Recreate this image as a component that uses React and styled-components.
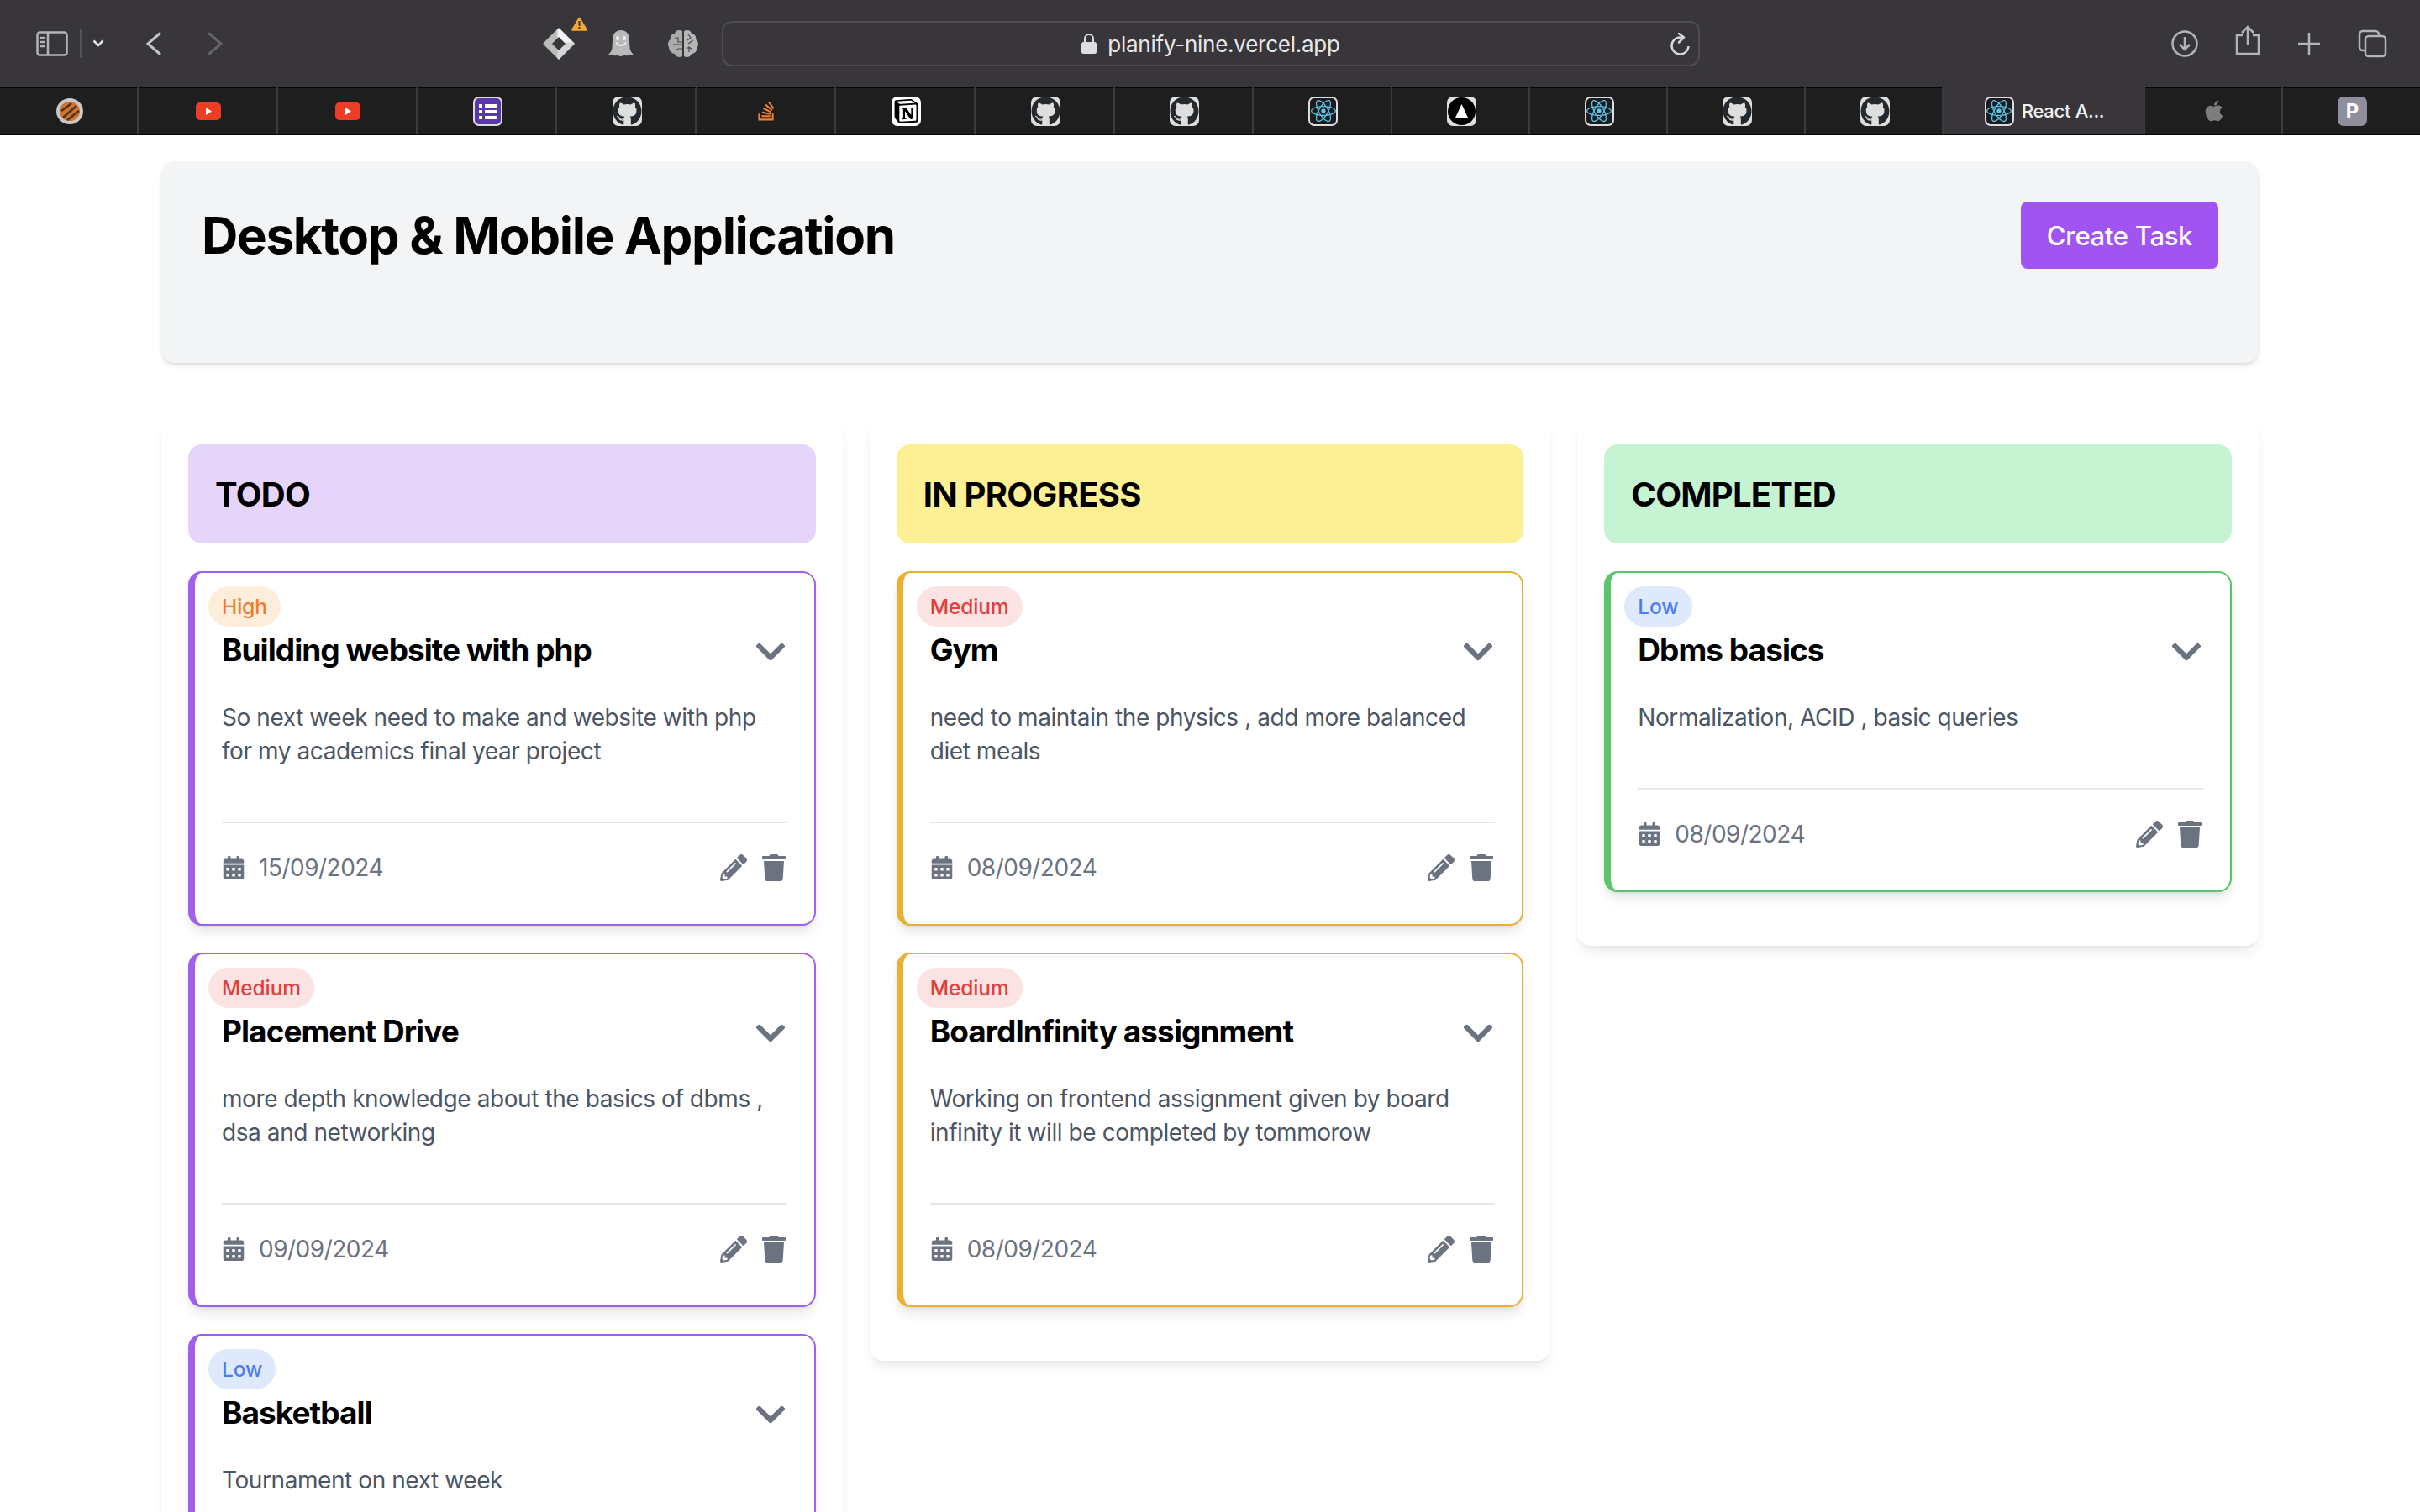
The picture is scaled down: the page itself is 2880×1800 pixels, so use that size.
import { styled, createGlobalStyle } from "styled-components";
import { FaChevronDown, FaPencilAlt, FaTrash, FaCalendarAlt, FaGithub, FaReact, FaApple, FaStackOverflow } from "react-icons/fa";
import { SiNotion } from "react-icons/si";

const GlobalStyle = createGlobalStyle`
  * { box-sizing: border-box; }
  html, body { margin: 0; padding: 0; background: #fff; overflow: hidden; }
  body { font-family: Inter, "Liberation Sans", sans-serif; }
`;

const Screen = styled.div`
  width: 2880px;
  height: 1800px;
  overflow: hidden;
  display: flex;
  flex-direction: column;
`;

// browser chrome
const Toolbar = styled.div`
  height: 103px;
  flex: none;
  background: #38363a;
  display: flex;
  align-items: center;
  color: #b4b4b6;
`;

const ToolIcon = styled.svg`
  flex: none;
  display: block;
  margin-left: ${({ $left }) => $left || 0}px;
  position: relative;
  top: ${({ $nudge }) => $nudge || 0}px;
`;

const ExtensionSlot = styled.div`
  position: relative;
  flex: none;
  margin-left: ${({ $left }) => $left || 0}px;
  display: flex;
`;

const WarningBadge = styled.svg`
  position: absolute;
  right: -15px;
  top: -13px;
`;

const AddressBar = styled.div`
  flex: none;
  margin-left: 27px;
  width: 1164px;
  height: 54px;
  border: 2px solid #4e4c50;
  border-radius: 12px;
  display: flex;
  align-items: center;
  justify-content: center;
  gap: 13px;
  position: relative;
`;

const AddressText = styled.span`
  font-size: 26px;
  font-weight: 400;
  color: #e8e8e8;
  letter-spacing: -0.25px;
  position: relative;
  top: 1px;
`;

const ReloadIcon = styled.svg`
  position: absolute;
  right: 9px;
  top: 12px;
`;

const TabStrip = styled.div`
  height: 58px;
  flex: none;
  display: flex;
  background: #1e1e1f;
`;

const Tab = styled.div`
  flex: 0 0 ${({ $width }) => $width}px;
  display: flex;
  align-items: center;
  justify-content: center;
  gap: 9px;
  padding-left: 2px;
  background: ${({ $active }) => ($active ? "#38363a" : "#1e1e1f")};
  border-top: 2px solid ${({ $active }) => ($active ? "#38363a" : "#050505")};
  border-bottom: 2px solid #050505;
  border-right: 2px solid #3b3b3d;
  &:last-child { border-right: none; }
`;

const TabTitle = styled.span`
  font-size: 22px;
  font-weight: 500;
  color: #f0f0f0;
  letter-spacing: -0.3px;
`;

const FaviconBox = styled.div`
  width: 35px;
  height: 35px;
  border-radius: 7px;
  display: flex;
  align-items: center;
  justify-content: center;
  background: ${({ $bg }) => $bg || "#dedede"};
  border: ${({ $border }) => ($border ? `2px solid ${$border}` : "none")};
  color: ${({ $fg }) => $fg || "#24292e"};
  font-size: 24px;
  font-weight: 700;
  overflow: hidden;
`;

const PlainFavicon = styled.div`
  display: flex;
  color: ${({ $fg }) => $fg || "#fff"};
`;

// page
const Page = styled.main`
  flex: 1;
  padding: 31px 192px 0;
  background: #fff;
  min-height: 0;
`;

const HeaderCard = styled.header`
  height: 240px;
  padding: 48px;
  background: #f3f4f6;
  border-radius: 16px;
  box-shadow: 0 4px 6px -1px rgba(0, 0, 0, 0.1), 0 2px 4px -2px rgba(0, 0, 0, 0.1);
  display: flex;
  justify-content: space-between;
  align-items: flex-start;
`;

const PageTitle = styled.h1`
  margin: 0;
  font-size: 60px;
  line-height: 80px;
  font-weight: 700;
  color: #000;
  letter-spacing: -1.3px;
`;

const CreateButton = styled.button`
  width: 235px;
  height: 80px;
  border: none;
  border-radius: 8px;
  background: #a055f0;
  color: #fff;
  font-family: inherit;
  font-size: 31px;
  font-weight: 500;
  letter-spacing: -0.3px;
`;

const Board = styled.section`
  margin-top: 65px;
  display: grid;
  grid-template-columns: repeat(3, 1fr);
  gap: 32px;
  align-items: start;
`;

const Column = styled.div`
  padding: 32px 32px 32px;
  background: #fff;
  border-radius: 16px;
  box-shadow: 0 10px 15px -3px rgba(0, 0, 0, 0.08), 0 4px 6px -4px rgba(0, 0, 0, 0.08);
`;

const ColumnHead = styled.h2`
  margin: 0 0 33px;
  height: 118px;
  padding: 0 32px;
  display: flex;
  align-items: center;
  border-radius: 16px;
  background: ${({ $bg }) => $bg};
  font-size: 40px;
  font-weight: 700;
  color: #000;
  letter-spacing: -0.75px;
`;

const Card = styled.article`
  margin-bottom: 32px;
  padding: 16px 0 0;
  background: #fff;
  border-radius: 16px;
  border: 2px solid ${({ $accent }) => $accent};
  border-left-width: 8px;
  box-shadow: 0 10px 15px -3px rgba(0, 0, 0, 0.1), 0 4px 6px -4px rgba(0, 0, 0, 0.1);
`;

const Badge = styled.span`
  display: inline-flex;
  align-items: center;
  margin-left: 16px;
  height: 48px;
  padding: 0 16px;
  border-radius: 24px;
  background: ${({ $bg }) => $bg};
  color: ${({ $fg }) => $fg};
  font-size: 24.5px;
  font-weight: 500;
  letter-spacing: -0.1px;
`;

const CardBody = styled.div`
  padding: 0 32px 46px;
`;

const TitleRow = styled.div`
  height: 54px;
  margin-bottom: 2px;
  display: flex;
  align-items: center;
  justify-content: space-between;
  color: #6b7280;
`;

const CardTitle = styled.h3`
  margin: 0;
  font-size: 37px;
  font-weight: 700;
  color: #000;
  letter-spacing: -0.95px;
`;

const Chevron = styled(FaChevronDown)`
  margin-top: 6px;
`;

const Description = styled.p`
  margin: 34px 0 64px;
  font-size: 28px;
  line-height: 40px;
  color: #4b5563;
  letter-spacing: -0.42px;
`;

const Footer = styled.div`
  border-top: 2px solid #e5e7eb;
  padding-top: 32px;
  height: 42px;
  box-sizing: content-box;
  display: flex;
  align-items: center;
  justify-content: space-between;
  color: #6b7280;
`;

const DateInfo = styled.div`
  display: flex;
  align-items: center;
  gap: 16px;
  font-size: 28px;
  letter-spacing: -0.5px;
`;

const Actions = styled.div`
  display: flex;
  align-items: center;
  gap: 16px;
`;

function Sidebar() {
  return (
    <ToolIcon $left={43} width="38" height="30" viewBox="0 0 38 30" fill="none" stroke="currentColor" strokeWidth="2.5">
      <rect x="1.5" y="1.5" width="35" height="27" rx="3" />
      <path d="M14 2v26" />
      <path d="M5 8h5M5 13h5M5 18h5" />
    </ToolIcon>
  );
}

function Diamond() {
  return (
    <svg width="38" height="38" viewBox="0 0 38 38" strokeWidth="3" strokeLinejoin="round">
      <path d="M2 19 19 2 12 19 19 36Z M2 19 19 2 19 11 11 19 19 27 19 36Z" fill="#bcbcbc" stroke="#bcbcbc" />
      <path d="M19 2 36 19 27 19 19 11Z" fill="#f4f4f4" stroke="#f4f4f4" />
      <path d="M36 19 19 36 19 27 27 19Z" fill="#d6d6d6" stroke="#d6d6d6" />
      <path d="M19 11 27 19 19 27 11 19Z" fill="#38363a" />
    </svg>
  );
}

function Ghost() {
  return (
    <svg width="30" height="31" viewBox="0 0 30 31">
      <path d="M15 0C8 0 5 5 5 12L4.500 21C4 25 2 27 0 29c2 .5 4 .5 5-.5 1.500 2 4 2.500 5.500.5 1.500 2.500 7 2.500 9 0 1.500 2 4 1.500 5.500-.5 1 1 3 1 5 .5-2-2-4-4-4.500-8L25 12C25 5 22 0 15 0Z" fill="#b9b9b9" />
      <ellipse cx="11" cy="9.500" rx="1.900" ry="2.800" fill="#ececec" />
      <ellipse cx="19" cy="9.500" rx="1.900" ry="2.800" fill="#ececec" />
      <path d="M9.500 15c2.500 4 8.500 4 11 0" fill="none" stroke="#ececec" strokeWidth="1.800" strokeLinecap="round" />
    </svg>
  );
}

function Brain() {
  return (
    <svg width="38" height="34" viewBox="0 0 38 34">
      <path d="M18 2C14 0 10 1 9 5 5 5 3 9 4 12 1 14 0 18 2 21 2 26 6 29 9 29 10 33 15 34 18 32Z" fill="#ababab" />
      <path d="M20 2C24 0 28 1 29 5 33 5 35 9 34 12 37 14 38 18 36 21 36 26 32 29 29 29 28 33 23 34 20 32Z" fill="#b6b6b6" />
      <path d="M7 18h11M9 10h4v5h5M10 25l3-2h5M25 6l3 4-4 3M31 13l-6 4M30 24l-4-3-3 2M26 21v6" fill="none" stroke="#4a484c" strokeWidth="1.200" />
    </svg>
  );
}

function Favicon({ kind }) {
  if (kind === "lpu") {
    return (
      <svg width="32" height="31" viewBox="0 0 32 31">
        <ellipse cx="16" cy="15.500" rx="16" ry="15.500" fill="#c8c8c8" />
        <ellipse cx="16" cy="15.500" rx="12" ry="11.500" fill="#d4742a" />
        <path d="M8 23 24 9M6 15 18 6M13 26 27 15" stroke="#4a3426" strokeWidth="2.500" />
      </svg>
    );
  }
  if (kind === "youtube") {
    return (
      <svg width="30" height="21" viewBox="0 0 30 21">
        <rect width="30" height="21" rx="5" fill="#ee3d24" />
        <path d="M12 6l7 4.500L12 15Z" fill="#fff" />
      </svg>
    );
  }
  if (kind === "forms") {
    return (
      <FaviconBox $bg="#5a37ad" $border="#dcdcdc">
        <svg width="23" height="23" viewBox="0 0 23 23" fill="#fff">
          <path d="M1 3h4v4H1zM8 3h14v4H8zM1 10h4v4H1zM8 10h14v4H8zM1 17h4v4H1zM8 17h14v4H8z" />
        </svg>
      </FaviconBox>
    );
  }
  if (kind === "github") {
    return (
      <FaviconBox>
        <FaGithub size={35} />
      </FaviconBox>
    );
  }
  if (kind === "stack") {
    return (
      <PlainFavicon $fg="#ee8131">
        <FaStackOverflow size={26} />
      </PlainFavicon>
    );
  }
  if (kind === "notion") {
    return (
      <FaviconBox $bg="#fff" $fg="#000">
        <SiNotion size={29} />
      </FaviconBox>
    );
  }
  if (kind === "react") {
    return (
      <FaviconBox $bg="#1c1c1e" $border="#dcdcdc" $fg="#5cc8ee">
        <FaReact size={30} />
      </FaviconBox>
    );
  }
  if (kind === "triangle") {
    return (
      <FaviconBox>
        <svg width="33" height="33" viewBox="0 0 33 33">
          <circle cx="16.500" cy="16.500" r="16.500" fill="#000" />
          <path d="M16.500 8 24 24H9Z" fill="#fff" />
        </svg>
      </FaviconBox>
    );
  }
  if (kind === "apple") {
    return (
      <PlainFavicon $fg="#7d7d7f">
        <FaApple size={28} />
      </PlainFavicon>
    );
  }
  return (
    <FaviconBox $bg="#8e8e9c" $fg="#fff">
      P
    </FaviconBox>
  );
}

const tabs = [
  { kind: "lpu", width: 165 },
  { kind: "youtube", width: 166 },
  { kind: "youtube", width: 166 },
  { kind: "forms", width: 166 },
  { kind: "github", width: 166 },
  { kind: "stack", width: 166 },
  { kind: "notion", width: 166 },
  { kind: "github", width: 166 },
  { kind: "github", width: 165 },
  { kind: "react", width: 165 },
  { kind: "triangle", width: 164 },
  { kind: "react", width: 164 },
  { kind: "github", width: 164 },
  { kind: "github", width: 164 },
];

const low = { label: "Low", bg: "#dfe9fc", fg: "#4a7df0" };
const medium = { label: "Medium", bg: "#fbe3e3", fg: "#e23d3d" };
const high = { label: "High", bg: "#fdeedb", fg: "#ee7d2f" };

const columns = [
  {
    title: "TODO",
    bg: "#e6d5fb",
    accent: "#a05ff0",
    cards: [
      {
        priority: high,
        title: "Building website with php",
        text: "So next week need to make and website with php for my academics final year project",
        date: "15/09/2024",
      },
      {
        priority: medium,
        title: "Placement Drive",
        text: "more depth knowledge about the basics of dbms , dsa and networking",
        date: "09/09/2024",
      },
      {
        priority: low,
        title: "Basketball",
        text: "Tournament on next week",
        date: "10/09/2024",
      },
    ],
  },
  {
    title: "IN PROGRESS",
    bg: "#fdef93",
    accent: "#ebb02f",
    cards: [
      {
        priority: medium,
        title: "Gym",
        text: "need to maintain the physics , add more balanced diet meals",
        date: "08/09/2024",
      },
      {
        priority: medium,
        title: "BoardInfinity assignment",
        text: "Working on frontend assignment given by board infinity it will be completed by tommorow",
        date: "08/09/2024",
      },
    ],
  },
  {
    title: "COMPLETED",
    bg: "#c6f4d2",
    accent: "#5dc46b",
    cards: [
      {
        priority: low,
        title: "Dbms basics",
        text: "Normalization, ACID , basic queries",
        date: "08/09/2024",
      },
    ],
  },
];

function TaskCard({ task, accent }) {
  return (
    <Card $accent={accent}>
      <Badge $bg={task.priority.bg} $fg={task.priority.fg}>
        {task.priority.label}
      </Badge>
      <CardBody>
        <TitleRow>
          <CardTitle>{task.title}</CardTitle>
          <Chevron size={40} />
        </TitleRow>
        <Description>{task.text}</Description>
        <Footer>
          <DateInfo>
            <FaCalendarAlt size={28} />
            {task.date}
          </DateInfo>
          <Actions>
            <FaPencilAlt size={32} />
            <FaTrash size={32} />
          </Actions>
        </Footer>
      </CardBody>
    </Card>
  );
}

export default function App() {
  return (
    <Screen>
      <GlobalStyle />
      <Toolbar>
        <Sidebar />
        <ToolIcon $left={14} width="2" height="34" viewBox="0 0 2 34">
          <rect width="2" height="34" fill="#55535a" />
        </ToolIcon>
        <ToolIcon $left={13} width="14" height="9" viewBox="0 0 14 9" fill="none" stroke="#e4e4e4" strokeWidth="2.500">
          <path d="M1.500 1.500 7 7l5.500-5.500" />
        </ToolIcon>
        <ToolIcon $left={50} width="18" height="28" viewBox="0 0 18 28" fill="none" stroke="#c4c4c4" strokeWidth="3" strokeLinecap="round">
          <path d="M16 2 2 14l14 12" />
        </ToolIcon>
        <ToolIcon $left={55} width="18" height="28" viewBox="0 0 18 28" fill="none" stroke="#666468" strokeWidth="3" strokeLinecap="round">
          <path d="M2 2l14 12L2 26" />
        </ToolIcon>
        <ExtensionSlot $left={381}>
          <Diamond />
          <WarningBadge width="19" height="17" viewBox="0 0 19 17">
            <path d="M9.500 2 17.500 15.500H1.500Z" fill="#f6a832" stroke="#f6a832" strokeWidth="2.500" strokeLinejoin="round" />
            <rect x="8.500" y="5" width="2" height="6" fill="#38363a" />
            <rect x="8.500" y="12" width="2" height="2" fill="#38363a" />
          </WarningBadge>
        </ExtensionSlot>
        <ExtensionSlot $left={40}>
          <Ghost />
        </ExtensionSlot>
        <ExtensionSlot $left={40}>
          <Brain />
        </ExtensionSlot>
        <AddressBar>
          <svg width="18" height="24" viewBox="0 0 18 24" fill="#dedede">
            <path d="M4 11V6a5 5 0 0 1 10 0v5" fill="none" stroke="#dedede" strokeWidth="2" />
            <rect y="10" width="18" height="14" rx="2.500" />
          </svg>
          <AddressText>planify-nine.vercel.app</AddressText>
          <ReloadIcon width="24" height="28" viewBox="0 0 24 28" fill="none" stroke="#d8d8d8" strokeWidth="2.500">
            <path d="M15 5.500H11.500A10 10 0 1 0 21.500 16" />
            <path d="M10 1l6 4.500-6 6" strokeLinecap="round" strokeLinejoin="round" />
          </ReloadIcon>
        </AddressBar>
        <ToolIcon $left={561} width="32" height="32" viewBox="0 0 32 32" fill="none" stroke="currentColor" strokeWidth="2.500">
          <circle cx="16" cy="16" r="14.500" />
          <path d="M16 8v15M10 17l6 6 6-6" />
        </ToolIcon>
        <ToolIcon $left={44} $nudge={-4} width="30" height="36" viewBox="0 0 30 36" fill="none" stroke="currentColor" strokeWidth="2.500">
          <path d="M9 12H2v22h26V12h-7" />
          <path d="M15 24V2M8 9l7-7 7 7" />
        </ToolIcon>
        <ToolIcon $left={44} width="28" height="28" viewBox="0 0 28 28" fill="none" stroke="currentColor" strokeWidth="2.500">
          <path d="M14 1v26M1 14h26" />
        </ToolIcon>
        <ToolIcon $left={44} width="35" height="34" viewBox="0 0 35 34" fill="none" stroke="currentColor" strokeWidth="2.500">
          <rect x="9" y="8" width="24" height="24" rx="4" />
          <path d="M9 25H6a4 4 0 0 1-4-4V6a4 4 0 0 1 4-4h15a4 4 0 0 1 4 4v2" />
        </ToolIcon>
      </Toolbar>
      <TabStrip>
        {tabs.map((tab, i) => (
          <Tab key={i} $width={tab.width}>
            <Favicon kind={tab.kind} />
          </Tab>
        ))}
        <Tab $active $width={240}>
          <Favicon kind="react" />
          <TabTitle>React A...</TabTitle>
        </Tab>
        <Tab $width={164}>
          <Favicon kind="apple" />
        </Tab>
        <Tab $width={163}>
          <Favicon kind="p" />
        </Tab>
      </TabStrip>
      <Page>
        <HeaderCard>
          <PageTitle>Desktop &amp; Mobile Application</PageTitle>
          <CreateButton>Create Task</CreateButton>
        </HeaderCard>
        <Board>
          {columns.map((col) => (
            <Column key={col.title}>
              <ColumnHead $bg={col.bg}>{col.title}</ColumnHead>
              {col.cards.map((task) => (
                <TaskCard key={task.title} task={task} accent={col.accent} />
              ))}
            </Column>
          ))}
        </Board>
      </Page>
    </Screen>
  );
}
